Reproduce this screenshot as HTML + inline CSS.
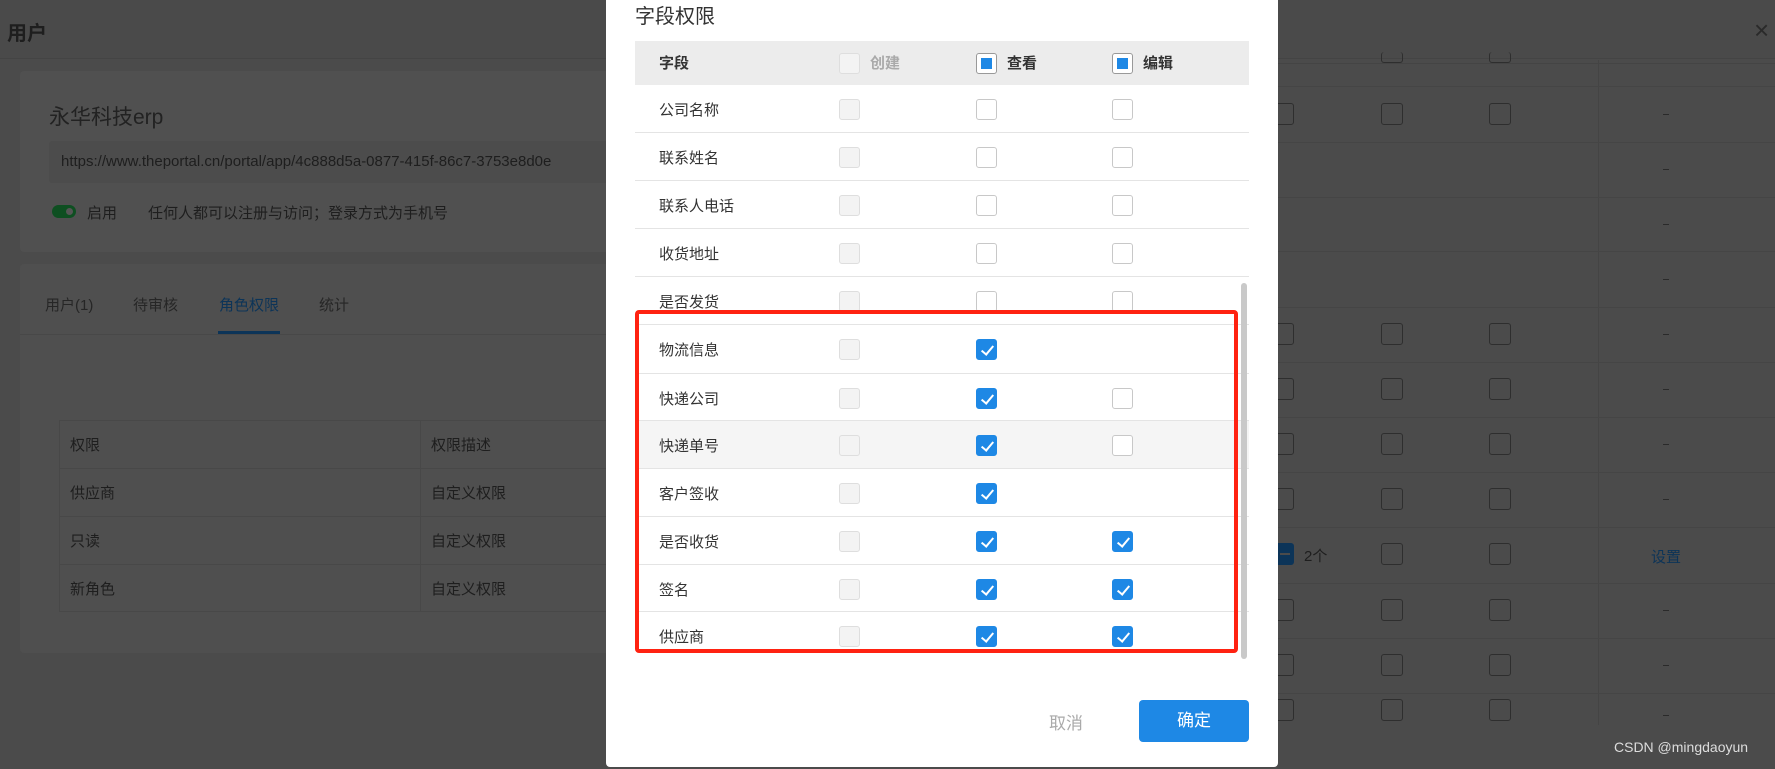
<!DOCTYPE html>
<html><head><meta charset="utf-8"><style>
*{box-sizing:border-box;margin:0;padding:0}
body{width:1775px;height:769px;overflow:hidden;position:relative;background:#4b4b4b;font-family:"Liberation Sans","Noto Sans CJK SC",sans-serif;}
.a{position:absolute}
.dt{color:#1e1e1e}
.cb{position:absolute;width:21px;height:21px;border:1px solid #c8c8c8;border-radius:3px;background:#fff}
.cb.dis{background:#f3f3f3;border-color:#dedede}
.cb.on{background:#1e88e5;border-color:#1e88e5}
.cb.on::after{content:"";position:absolute;left:7px;top:3px;width:5px;height:10px;border:solid #fff;border-width:0 2px 2px 0;transform:rotate(40deg)}
.cb.half::after{content:"";position:absolute;left:4px;top:4px;width:11px;height:11px;background:#1e88e5}
.bcb{position:absolute;width:22px;height:22px;border:1px solid #2e2e2e;border-radius:3px}
.row{position:absolute;left:635px;width:614px;height:48px;border-bottom:1px solid #e4e4e4;font-size:15px;color:#333;overflow:hidden}
.row span{position:absolute;left:24px;top:14px}
</style></head><body>
<div class="a" style="left:0;top:0;width:1775px;height:59px;background:#4a4a4a;border-bottom:1px solid #444"></div>
<div class="a dt" style="left:7px;top:17px;font-size:20px;font-weight:bold">用户</div>
<div class="a" style="left:1754px;top:17px;font-size:26px;color:#2a2a2a;line-height:26px">×</div>
<div class="a" style="left:20px;top:71px;width:620px;height:181px;background:#505050;border-radius:4px"></div>
<div class="a dt" style="left:49px;top:101px;font-size:21px;color:#222">永华科技erp</div>
<div class="a" style="left:49px;top:141px;width:600px;height:42px;background:#4c4c4c;border-radius:3px"></div>
<div class="a dt" style="left:61px;top:153px;font-size:15px">https://www.theportal.cn/portal/app/4c888d5a-0877-415f-86c7-3753e8d0e</div>
<div class="a" style="left:52px;top:205px;width:24px;height:13px;border-radius:7px;background:#0e4f21"></div>
<div class="a" style="left:66px;top:208px;width:7px;height:7px;border-radius:50%;background:#555"></div>
<div class="a dt" style="left:87px;top:202px;font-size:15px">启用</div>
<div class="a dt" style="left:148px;top:202px;font-size:15px">任何人都可以注册与访问；登录方式为手机号</div>
<div class="a" style="left:20px;top:264px;width:620px;height:389px;background:#4f4f4f;border-radius:4px"></div>
<div class="a" style="left:20px;top:334px;width:620px;height:1px;background:#484848"></div>
<div class="a dt" style="left:45px;top:294px;font-size:15px;color:#262626">用户(1)</div>
<div class="a dt" style="left:133px;top:294px;font-size:15px;color:#262626">待审核</div>
<div class="a" style="left:219px;top:294px;font-size:15px;color:#0c3458">角色权限</div>
<div class="a dt" style="left:319px;top:294px;font-size:15px;color:#262626">统计</div>
<div class="a" style="left:218px;top:331px;width:62px;height:3px;background:#0c3458"></div>
<div class="a" style="left:59px;top:420px;width:560px;height:192px;border:1px solid #484848"></div>
<div class="a" style="left:420px;top:420px;width:1px;height:192px;background:#484848"></div>
<div class="a" style="left:59px;top:468px;width:560px;height:1px;background:#484848"></div>
<div class="a" style="left:59px;top:516px;width:560px;height:1px;background:#484848"></div>
<div class="a" style="left:59px;top:564px;width:560px;height:1px;background:#484848"></div>
<div class="a dt" style="left:70px;top:434px;font-size:15px">权限</div>
<div class="a dt" style="left:431px;top:434px;font-size:15px">权限描述</div>
<div class="a dt" style="left:70px;top:482px;font-size:15px">供应商</div>
<div class="a dt" style="left:431px;top:482px;font-size:15px">自定义权限</div>
<div class="a dt" style="left:70px;top:530px;font-size:15px">只读</div>
<div class="a dt" style="left:431px;top:530px;font-size:15px">自定义权限</div>
<div class="a dt" style="left:70px;top:578px;font-size:15px">新角色</div>
<div class="a dt" style="left:431px;top:578px;font-size:15px">自定义权限</div>
<div class="a" style="left:1278px;top:63px;width:497px;height:1px;background:#444"></div>
<div class="a" style="left:1598px;top:60px;width:1px;height:665px;background:#444"></div>
<div id="bg"></div>
<div class="a" style="left:1278px;top:543px;width:16px;height:22px;background:#0c3458;border-radius:0 3px 3px 0"></div>
<div class="a" style="left:1280px;top:553px;width:10px;height:2px;background:#4b4b4b"></div>
<div class="a dt" style="left:1304px;top:545px;font-size:15px">2个</div>
<div class="a" style="left:1651px;top:546px;font-size:15px;color:#0c3458">设置</div>
<div class="a" style="left:1614px;top:739px;font-size:14px;color:#ddd">CSDN @mingdaoyun</div>
<div class="a" style="left:606px;top:-6px;width:672px;height:773px;background:#fff;border-radius:4px"></div>
<div class="a" style="left:635px;top:0px;font-size:20px;color:#333">字段权限</div>
<div class="a" style="left:635px;top:41px;width:614px;height:44px;background:#ececec"></div>
<div class="a" style="left:659px;top:52px;font-size:15px;font-weight:bold;color:#333">字段</div>
<div class="cb dis" style="left:839px;top:53px"></div>
<div class="a" style="left:870px;top:52px;font-size:15px;font-weight:bold;color:#aaa">创建</div>
<div class="cb half" style="left:976px;top:53px;border-color:#999"></div>
<div class="a" style="left:1007px;top:52px;font-size:15px;font-weight:bold;color:#333">查看</div>
<div class="cb half" style="left:1112px;top:53px;border-color:#999"></div>
<div class="a" style="left:1143px;top:52px;font-size:15px;font-weight:bold;color:#333">编辑</div>
<div id="rows"></div>
<div class="a" style="left:1241px;top:283px;width:6px;height:376px;background:#c9c9c9;border-radius:3px"></div>
<div class="a" style="left:635px;top:310px;width:603px;height:343px;border:4px solid #ff2211;border-radius:4px"></div>
<div class="a" style="left:1049px;top:709px;font-size:17px;color:#aaa">取消</div>
<div class="a" style="left:1139px;top:700px;width:110px;height:42px;background:#1e88e5;border-radius:4px;color:#fff;font-size:17px;text-align:center;line-height:42px">确定</div>
<script>
(function(){
var rows=[["公司名称",0,0],["联系姓名",0,0],["联系人电话",0,0],["收货地址",0,0],["是否发货",0,0],["",-1,-1],["物流信息",1,-1],["快递公司",1,0],["快递单号",1,0],["客户签收",1,-1],["是否收货",1,1],["签名",1,1],["供应商",1,1]];
var h="";
var hs=[85,133,181,229,277,325,325,374,421,469,517,565,612];
for(var i=0;i<rows.length;i++){var r=rows[i];var ty=hs[i],ht=(hs[i+1]||660)-ty;
 if(i==5)continue;
 if(i==12)ht=48;
 h+='<div class="row" style="top:'+ty+'px;height:'+ht+'px;'+(i==8?'background:#f5f5f5;':'')+(i==12?'border:none;':'')+'">';
 h+='<span>'+r[0]+'</span><div class="cb dis" style="left:204px;top:14px"></div>';
 h+='<div class="cb'+(r[1]==1?' on':'')+'" style="left:341px;top:14px"></div>';
 if(r[2]>=0)h+='<div class="cb'+(r[2]==1?' on':'')+'" style="left:477px;top:14px"></div>';
 h+='</div>';}
document.getElementById('rows').innerHTML=h;
var g="",ly=[86,142,197,251,307,362,417,472,527,583,638,693];
for(var j=0;j<ly.length;j++){g+='<div class="a" style="left:1278px;top:'+ly[j]+'px;width:497px;height:1px;background:#454545"></div>';}
var centers=[114,334,389,444,499,554,610,665,710];
for(var k=0;k<centers.length;k++){var c=centers[k];
 if(k!=5)g+='<div class="bcb" style="left:1272px;top:'+(c-11)+'px"></div>';
 g+='<div class="bcb" style="left:1381px;top:'+(c-11)+'px"></div><div class="bcb" style="left:1489px;top:'+(c-11)+'px"></div>';}
var dashes=[114,169,224,279,334,389,444,499,610,665,715];
for(var d=0;d<dashes.length;d++)g+='<div class="a" style="left:1663px;top:'+dashes[d]+'px;width:6px;height:1px;background:#2a2a2a"></div>';
g+='<div class="bcb" style="left:1381px;top:52px;height:11px;border-top:none"></div><div class="bcb" style="left:1489px;top:52px;height:11px;border-top:none"></div>';
document.getElementById('bg').innerHTML=g;
})();
</script>
</body></html>
